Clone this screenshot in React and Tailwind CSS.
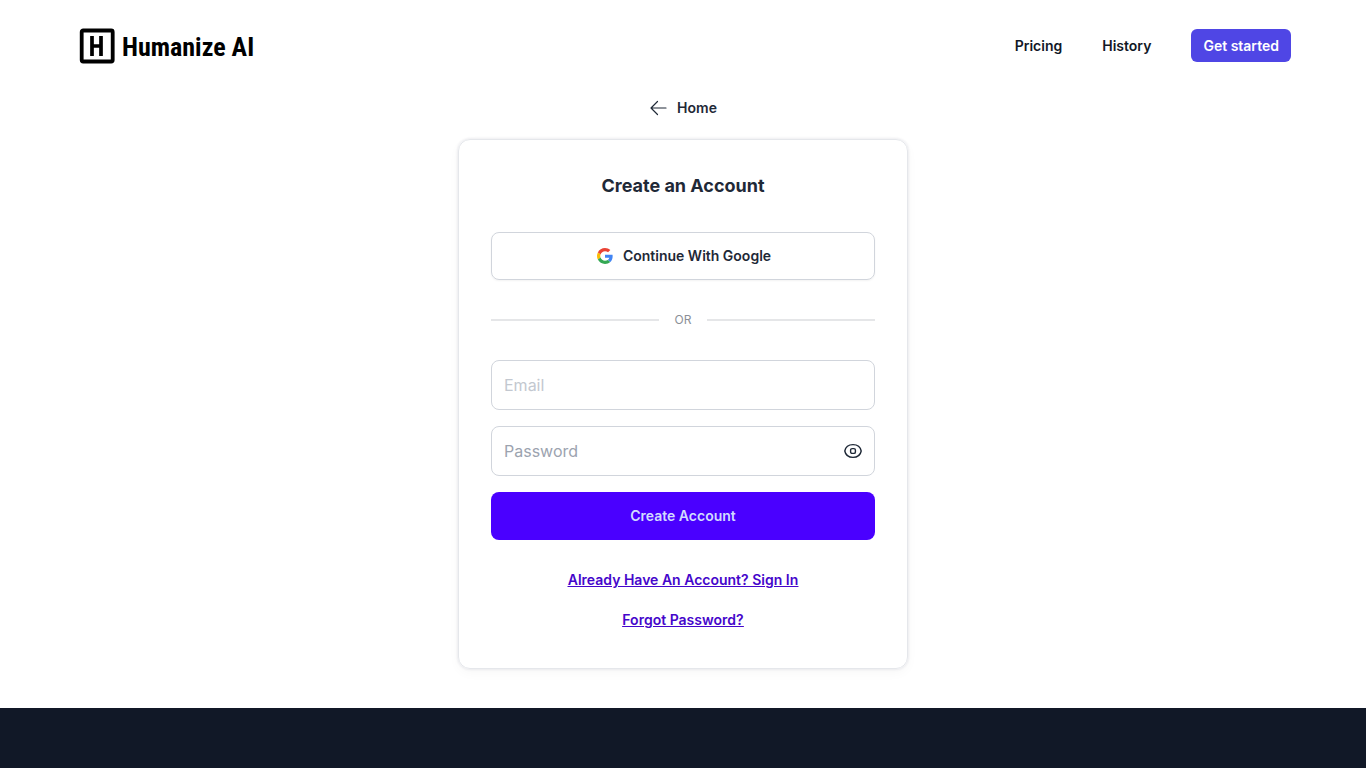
import { useState } from "react";

function Logo() {
  return (
    <a href="/" aria-label="Humanize AI home" className="flex items-center gap-[7px] text-black">
      <svg className="size-9" viewBox="0 0 36 36" fill="none" stroke="currentColor" aria-hidden="true">
        <rect x="2.7" y="2.5" width="31" height="31" rx="1.5" strokeWidth="3.8" />
        <path d="M13 8v20M22 8v20M13 18h9" strokeWidth="3.7" />
      </svg>
      <span className="whitespace-nowrap pt-0.5 font-['Roboto_Condensed','Liberation_Sans',sans-serif] text-[26px] leading-9 font-bold">
        Humanize AI
      </span>
    </a>
  );
}

function GoogleIcon() {
  return (
    <svg className="size-4" viewBox="0 0 48 48" aria-hidden="true">
      <path fill="#EA4335" d="M24 9.5c3.54 0 6.71 1.22 9.21 3.6l6.85-6.85C35.9 2.38 30.47 0 24 0 14.62 0 6.51 5.38 2.56 13.22l7.98 6.19C12.43 13.72 17.74 9.5 24 9.5z" />
      <path fill="#4285F4" d="M46.98 24.55c0-1.57-.15-3.09-.38-4.55H24v9.02h12.94c-.58 2.96-2.26 5.48-4.78 7.18l7.73 6c4.51-4.18 7.09-10.36 7.09-17.65z" />
      <path fill="#FBBC05" d="M10.53 28.59c-.48-1.45-.76-2.99-.76-4.59s.27-3.14.76-4.59l-7.98-6.19C.92 16.46 0 20.12 0 24c0 3.88.92 7.54 2.56 10.78l7.97-6.19z" />
      <path fill="#34A853" d="M24 48c6.48 0 11.93-2.13 15.89-5.81l-7.73-6c-2.15 1.45-4.92 2.3-8.16 2.3-6.26 0-11.57-4.22-13.47-9.91l-7.98 6.19C6.51 42.62 14.62 48 24 48z" />
    </svg>
  );
}

export default function App() {
  const [visible, setVisible] = useState(false);

  return (
    <div className="flex min-h-screen flex-col bg-white font-['Inter',sans-serif] text-sm text-[#1f2937]">
      <header className="flex h-[91px] items-center justify-between pr-[75px] pl-[79px]">
        <Logo />
        <nav className="flex items-center gap-10 font-semibold text-[#111827]">
          <a href="/pricing">Pricing</a>
          <a href="/history">History</a>
          <a href="/start" className="flex h-[33px] items-center rounded-md bg-[#4f46e5] px-3 text-white">
            Get started
          </a>
        </nav>
      </header>

      <main className="flex flex-col items-center px-4 pt-px pb-[39px]">
        <a href="/" className="flex h-8 items-center gap-2.5 font-semibold">
          <svg className="size-[18px]" viewBox="0 0 18 18" fill="none" stroke="currentColor" strokeWidth="1.2" strokeLinecap="round" strokeLinejoin="round" aria-hidden="true">
            <path d="M17 9H2M8.5 2.5 2 9 8.5 15.5" />
          </svg>
          Home
        </a>

        <section className="mt-[15px] flex w-full max-w-[450px] flex-col rounded-xl border border-[#e5e7eb] px-8 py-8 shadow-[0_0_3px_rgba(30,30,80,0.14),0_4px_12px_rgba(0,0,0,0.03)]">
          <h1 className="text-center text-lg leading-7 font-bold">Create an Account</h1>

          <button type="button" className="mt-8 flex h-12 items-center justify-center gap-2.5 rounded-lg border border-gray-300 pl-0.5 font-semibold shadow-xs">
            <GoogleIcon />
            Continue With Google
          </button>

          <div className="my-8 flex h-4 items-center gap-4 text-xs text-[#8b8f97]">
            <span className="h-0.5 flex-1 bg-[#e5e6e8]" />
            OR
            <span className="h-0.5 flex-1 bg-[#e5e6e8]" />
          </div>

          <form className="flex flex-col gap-4" onSubmit={(e) => e.preventDefault()}>
            <input
              type="email"
              aria-label="Email"
              placeholder="Email"
              className="h-[50px] w-full rounded-lg border border-gray-300 px-3 text-base placeholder:text-[#c3c8d0]"
            />
            <div className="flex h-[50px] items-center rounded-lg border border-gray-300 pr-3">
              <input
                type={visible ? "text" : "password"}
                aria-label="Password"
                placeholder="Password"
                className="h-full min-w-0 flex-1 rounded-lg px-3 text-base outline-none placeholder:text-[#9ca3af]"
              />
              <button type="button" aria-label="Show password" onClick={() => setVisible(!visible)}>
                <svg className="size-[18px]" viewBox="0 0 18 18" fill="none" stroke="currentColor" strokeWidth="1.4" aria-hidden="true">
                  <path d="M.8 9C1.6 4.8 4.7 2.6 9 2.6S16.4 4.8 17.2 9C16.4 13.2 13.3 15.4 9 15.4S1.6 13.2.8 9Z" />
                  <rect x="6.6" y="6.6" width="4.8" height="4.8" rx="1.5" />
                </svg>
              </button>
            </div>
            <button type="submit" className="h-12 rounded-lg bg-[#4a00ff] font-semibold text-[#d1dbff]">
              Create Account
            </button>
          </form>

          <div className="mt-[30px] flex flex-col items-center gap-5 pb-[6px] font-semibold text-[#4506cb] underline">
            <a href="/signin">Already Have An Account? Sign In</a>
            <a href="/forgot">Forgot Password?</a>
          </div>
        </section>
      </main>

      <footer className="min-h-15 flex-1 bg-[#111827]" />
    </div>
  );
}
